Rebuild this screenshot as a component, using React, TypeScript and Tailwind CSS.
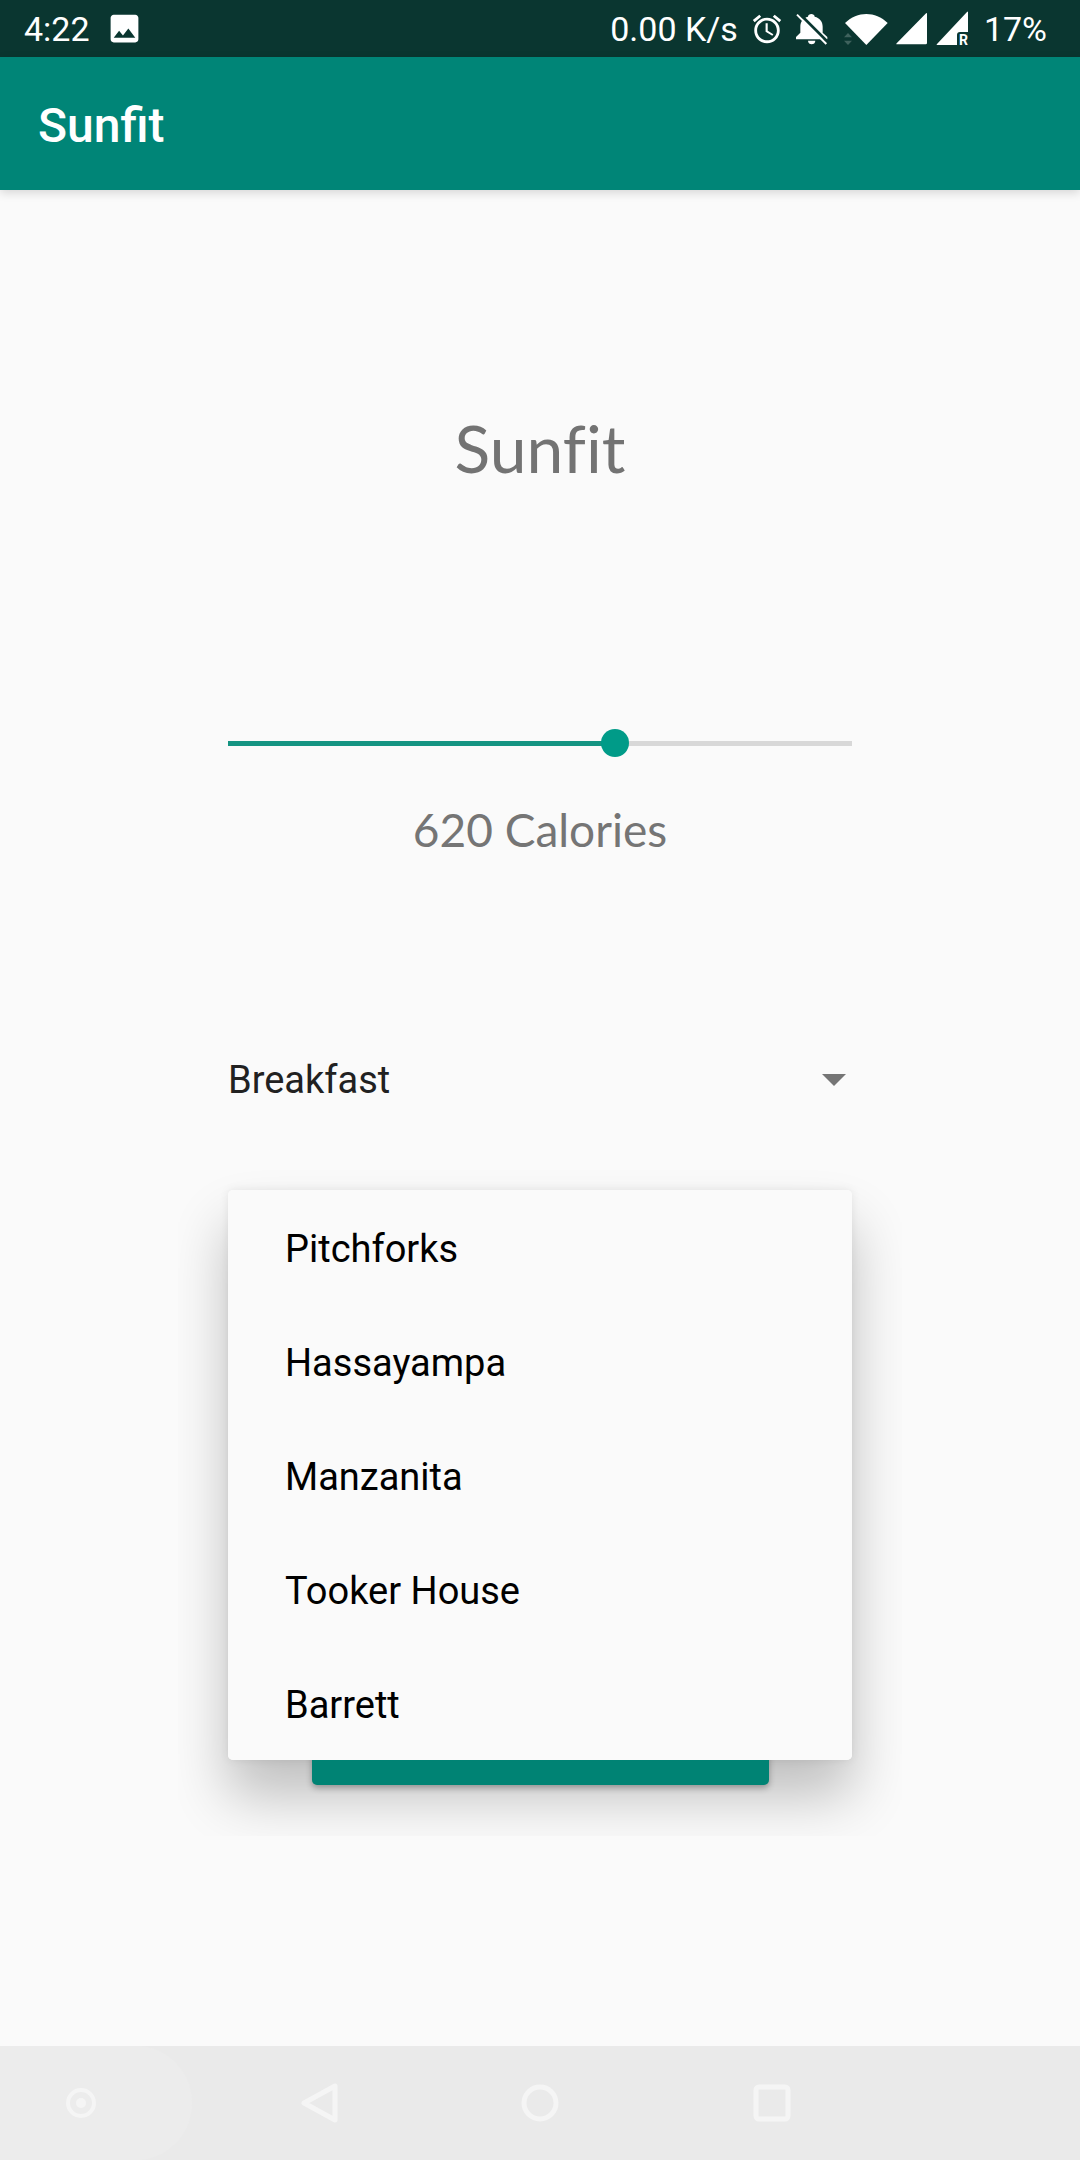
import { useState } from "react";
import { MdAlarm, MdImage } from "react-icons/md";

const halls = ["Pitchforks", "Hassayampa", "Manzanita", "Tooker House", "Barrett"];
const meals = ["Breakfast", "Lunch", "Dinner"];

function StatusBar() {
  return (
    <div className="flex h-[57px] items-center bg-[#0a3630] pl-6 pr-[33px] text-[34px] leading-10 text-white">
      <span>4:22</span>
      <MdImage className="ml-4 size-[37px]" />
      <span className="ml-auto">0.00 K/s</span>
      <MdAlarm className="ml-3 size-[34px]" />

      {/* muted bell */}
      <svg className="ml-3 h-8 w-8" viewBox="0 0 96 96" fill="none">
        <path
          d="M36 11c0-11 20-11 20 0 16 4 24 15 24 30v18l14 13v7H0v-7l13-13V41c0-15 8-26 23-30z"
          fill="#fff"
        />
        <path d="M36 83h22c0 14-22 14-22 0z" fill="#fff" />
        <path d="M8 0l90 90" stroke="#0a3630" strokeWidth="9" />
        <path d="M3 5l88 88" stroke="#fff" strokeWidth="6" />
      </svg>

      {/* wifi */}
      <svg className="ml-4 h-8 w-11" viewBox="0 0 132 96">
        <path d="M3 30C40-6 94-6 131 30L67 96z" fill="#fff" />
        <path d="M0 73l12-13 12 13zM0 83h24L12 96z" fill="#3f625d" />
      </svg>

      {/* signal */}
      <svg className="ml-2 h-8 w-8" viewBox="0 0 96 96">
        <path d="M93 2v88q0 4-4 4H3q-4 0-1-3L88 3q5-5 5-1z" fill="#fff" />
      </svg>

      {/* roaming signal */}
      <svg className="ml-2 h-[36px] w-[36px]" viewBox="0 0 36 36">
        <path d="M32 1v32q0 1-1 1H1q-1 0 0-1L31 1q1-1 1 0z" fill="#fff" />
        <path d="M21 36V24q0-3 3-3h9v15z" fill="#0a3630" />
        <text x="23" y="34" fontSize="14" fontWeight="700" fill="#fff">
          R
        </text>
      </svg>

      <span className="ml-3">17%</span>
    </div>
  );
}

function NavBar() {
  return (
    <nav className="mt-auto flex h-[114px] bg-[#eaeaea] text-[#f5f5f5]">
      <button
        aria-label="Hide bar"
        className="flex w-48 items-center justify-center rounded-r-[56px] bg-[#ececec] pr-[30px]"
      >
        <svg className="size-8" viewBox="0 0 32 32" fill="none">
          <circle cx="16" cy="16" r="13" stroke="currentColor" strokeWidth="4" />
          <circle cx="16" cy="16" r="5" fill="currentColor" />
        </svg>
      </button>
      <button aria-label="Back" className="flex flex-1 items-center justify-center">
        <svg className="h-10 w-16" viewBox="0 0 64 40" fill="none">
          <path
            d="M59 3v34L28 20z"
            stroke="currentColor"
            strokeWidth="5"
            strokeLinejoin="round"
          />
        </svg>
      </button>
      <button aria-label="Home" className="flex flex-1 items-center justify-center">
        <svg className="size-10" viewBox="0 0 40 40" fill="none">
          <circle cx="20" cy="20" r="16" stroke="currentColor" strokeWidth="5" />
        </svg>
      </button>
      <button aria-label="Recent apps" className="flex flex-1 items-center justify-center">
        <svg className="size-10" viewBox="0 0 40 40" fill="none">
          <rect x="4" y="4" width="32" height="32" rx="3" stroke="currentColor" strokeWidth="5" />
        </svg>
      </button>
      <div className="w-48" />
    </nav>
  );
}

export default function App() {
  const [calories, setCalories] = useState(620);
  const [meal, setMeal] = useState("Breakfast");
  const [hall, setHall] = useState("");

  return (
    <div className="flex min-h-screen flex-col bg-[#fafafa] font-['Roboto',sans-serif]">
      <StatusBar />
      <header className="flex h-[133px] items-center bg-[#008577] px-[38px] pt-1 shadow-[0_3px_9px_rgba(0,0,0,0.14)]">
        <span className="text-[48px] font-medium leading-[56px] text-white">Sunfit</span>
      </header>

      <main className="mx-auto flex w-full max-w-[624px] flex-col pt-[218px]">
        <h1 className="text-center font-['Lato',sans-serif] text-[66px] leading-[80px] text-[#737373] [font-variant-ligatures:none]">
          Sunfit
        </h1>

        <div className="relative mt-[241px] flex h-7 items-center">
          <div className="h-[5px] w-full bg-[#d8d8d8]">
            <div className="h-full bg-[#159482]" style={{ width: `${calories / 10}%` }} />
          </div>
          {/* the input is one thumb wider than the track so the thumb centre runs end to end */}
          <input
            id="calories"
            type="range"
            min={0}
            max={1000}
            step={10}
            value={calories}
            onChange={(e) => setCalories(Number(e.target.value))}
            className="absolute -inset-x-3.5 h-7 appearance-none bg-transparent focus:outline-none [&::-webkit-slider-thumb]:size-7 [&::-webkit-slider-thumb]:appearance-none [&::-webkit-slider-thumb]:rounded-full [&::-webkit-slider-thumb]:bg-[#009b88]"
          />
        </div>
        <label
          htmlFor="calories"
          className="mt-[43px] text-center font-['Lato',sans-serif] text-[46px] leading-[60px] text-[#757575]"
        >
          {calories} Calories
        </label>

        <div className="relative mt-[191px] flex items-center">
          <select
            aria-label="Meal"
            value={meal}
            onChange={(e) => setMeal(e.target.value)}
            className="h-[57px] w-full appearance-none bg-transparent pt-px text-[38px] text-[#212121] focus:outline-none"
          >
            {meals.map((m) => (
              <option key={m}>{m}</option>
            ))}
          </select>
          <svg className="pointer-events-none absolute right-1.5 h-3 w-6" viewBox="0 0 24 12">
            <path d="M0 0h24L12 12z" fill="#757575" />
          </svg>
        </div>

        <div className="relative mt-[82px] flex h-[595px] flex-col items-center justify-end">
          {/* dropdown shadow, kept under the button */}
          <div className="absolute inset-x-0 top-0 [clip-path:inset(-40px_-50px_-76px)]">
            <div className="h-[570px] rounded-[5px] shadow-[0_36px_56px_rgba(0,0,0,0.24),0_0_10px_rgba(0,0,0,0.08)]" />
          </div>

          <button
            aria-label="Submit"
            className="relative h-[85px] w-[457px] max-w-full rounded-[5px] bg-[#008374] shadow-[0_3px_6px_rgba(0,0,0,0.3)]"
          />

          {/* open dropdown */}
          <ul
            role="listbox"
            aria-label="Dining hall"
            className="absolute inset-x-0 top-0 rounded-[5px] bg-[#fafafa]"
          >
            {halls.map((h) => (
              <li key={h} role="option" aria-selected={h === hall}>
                <button
                  onClick={() => setHall(h)}
                  className="h-[114px] w-full px-[57px] pt-1 text-left text-[38px] text-black"
                >
                  {h}
                </button>
              </li>
            ))}
          </ul>
        </div>
      </main>

      <NavBar />
    </div>
  );
}
